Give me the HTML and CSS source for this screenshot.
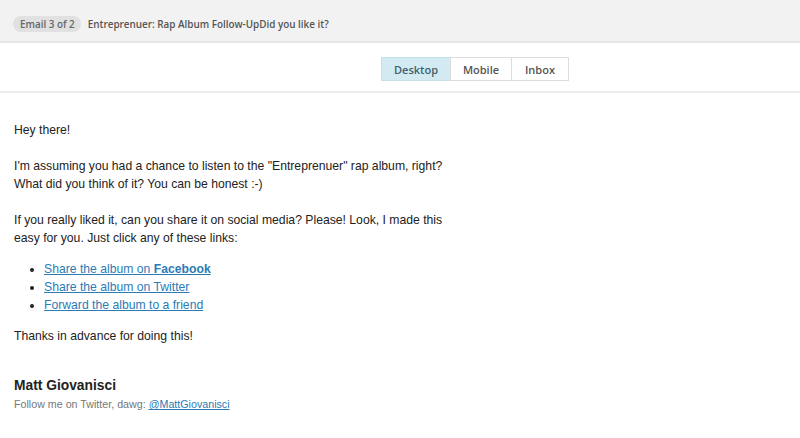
FILE: index.html
```html
<!DOCTYPE html>
<html lang="en">
<head>
    <meta charset="UTF-8">
    <meta name="viewport" content="width=device-width, initial-scale=1.0">
    <title>Email Preview</title>
    <link rel="stylesheet" href="styles.css">
</head>
<body>

<header class="topbar">
    <span class="badge">Email 3 of 2</span>
    <span class="subject">Entreprenuer: Rap Album Follow-UpDid you like it?</span>
</header>

<div class="toolbar">
    <div class="tabs">
        <button class="tab active">Desktop</button>
        <button class="tab">Mobile</button>
        <button class="tab last">Inbox</button>
    </div>
</div>

<div class="email">
    <div class="copy">
        Hey there!<br><br>
        I'm assuming you had a chance to listen to the "Entreprenuer" rap album, right?<br>
        What did you think of it? You can be honest :-)<br><br>
        If you really liked it, can you share it on social media? Please! Look, I made this<br>
        easy for you. Just click any of these links:
    </div>
    <ul class="links">
        <li><a href="#">Share the album on <b>Facebook</b></a></li>
        <li><a href="#">Share the album on Twitter</a></li>
        <li><a href="#">Forward the album to a friend</a></li>
    </ul>
    <div class="copy">Thanks in advance for doing this!</div>

    <div class="signature">
        <div class="name">Matt Giovanisci</div>
        <div class="follow">Follow me on Twitter, dawg: <a href="#">@MattGiovanisci</a></div>
    </div>
</div>

</body>
</html>
```

FILE: styles.css
```css
body {
    margin: 0;
    padding: 0;
    background-color: #fff;
    font-family: 'Liberation Sans', Arial, sans-serif;
}
.topbar {
    display: flex;
    align-items: center;
    gap: 7px;
    height: 34px;
    padding: 7px 13px 0;
    background-color: #f2f2f2;
    border-bottom: 2px solid #e6e6e6;
    font-family: 'Open Sans', sans-serif;
    font-size: 9.9px;
    font-weight: 600;
    color: #555;
}
.badge {
    background-color: #e1e1e1;
    color: #666;
    padding: 1px 6px 1px 7px;
    border-radius: 8px;
}
.toolbar {
    height: 34px;
    padding: 14px 0 0 381px;
    border-bottom: 2px solid #ececec;
}
.tabs {
    display: flex;
}
.tab {
    font-family: 'Open Sans', sans-serif;
    font-size: 11px;
    font-weight: 600;
    color: #555;
    background-color: #fff;
    border: 1px solid #ddd;
    margin-left: -1px;
    height: 24px;
    padding: 0;
    width: 62px;
}
.tab.active {
    background-color: #d3eaf2;
    color: #41606c;
    border-color: #c4dfe9;
    width: 70px;
    margin-left: 0;
}
.tab.last {
    width: 58px;
}
.email {
    padding: 28px 14px 0;
    font-size: 12.2px;
    line-height: 18px;
    color: #222;
}
.links {
    margin: 13px 0;
    padding-left: 30px;
}
.links a {
    color: #2b7bb5;
}
.signature {
    margin-top: 32px;
}
.name {
    font-size: 13.8px;
    font-weight: bold;
}
.follow {
    font-size: 10.7px;
    line-height: 19px;
    color: #777;
}
.follow a {
    color: #2b7bb5;
}
```
